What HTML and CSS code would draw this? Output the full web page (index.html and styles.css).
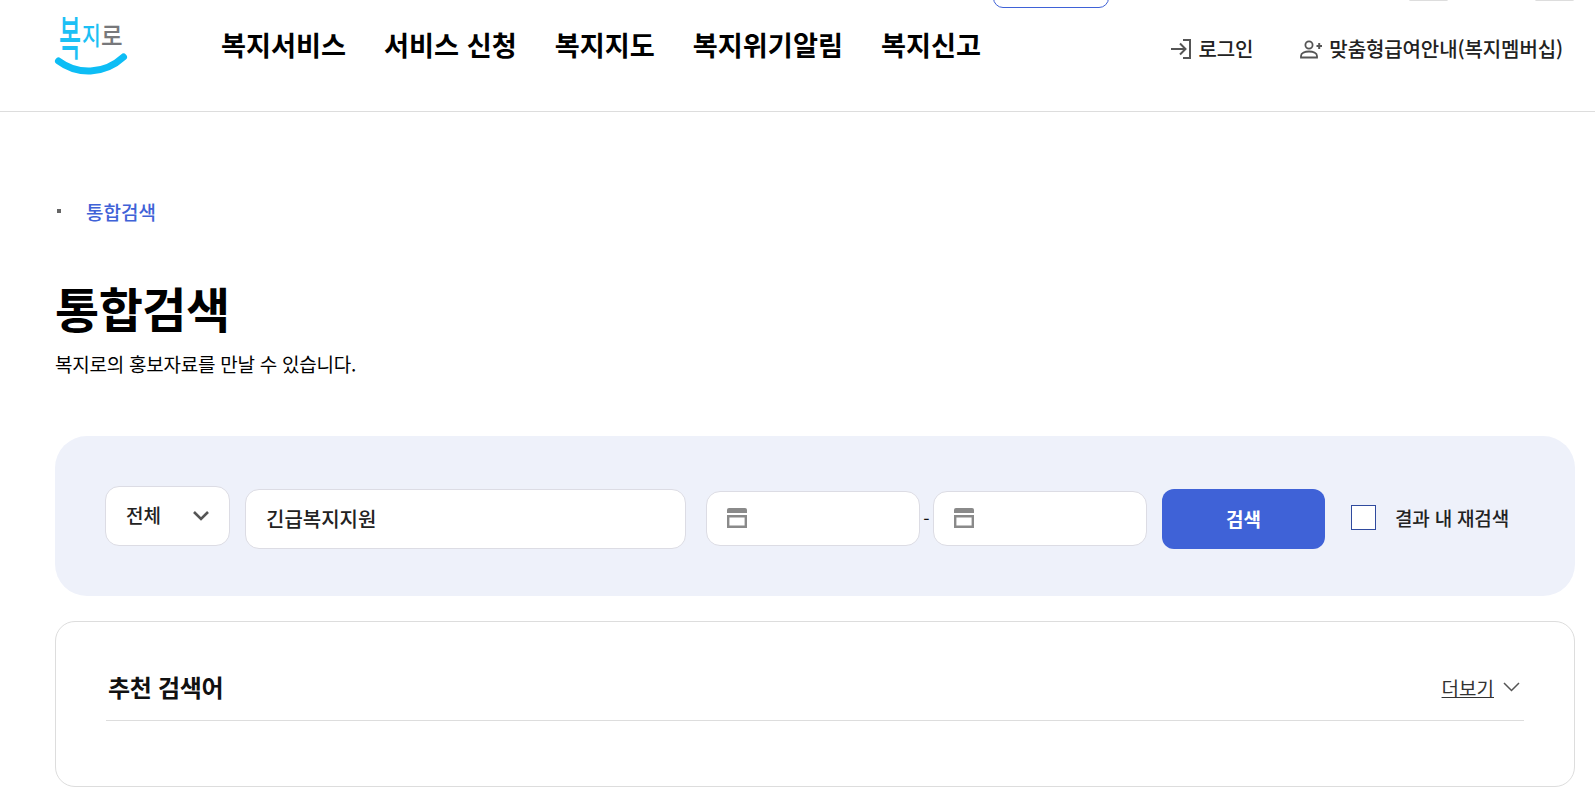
FILE: index.html
```html
<!DOCTYPE html>
<html lang="ko">
<head>
<meta charset="utf-8">
<title>통합검색</title>
<link rel="stylesheet" href="styles.css">
</head>
<body>
<header class="header">
  <a class="logo" href="#" aria-label="복지로">
    <svg width="76" height="72" viewBox="0 0 76 72">
      <text class="logo-a" transform="translate(7 47) scale(1 1.93)">복</text>
      <text class="logo-b" transform="translate(30 37) scale(.85 1.05)">지</text>
      <text class="logo-c" transform="translate(49 37) scale(.98 1.05)">로</text>
      <path d="M6.500 53 C25 67 52 67 71.500 49" fill="none" stroke="#0dbdf5" stroke-width="7" stroke-linecap="round"/>
    </svg>
  </a>
  <nav class="gnb">
    <a href="#">복지서비스</a>
    <a href="#">서비스 신청</a>
    <a href="#">복지지도</a>
    <a href="#">복지위기알림</a>
    <a href="#">복지신고</a>
  </nav>
  <div class="util">
    <a href="#" class="util-link">
      <svg width="20" height="20" viewBox="0 0 20 20" fill="none" stroke="#555" stroke-width="2">
        <path d="M0 10H14M9 4.500L14.500 10L9 15.500"/><path d="M12 1H19V19H12"/>
      </svg>로그인</a>
    <a href="#" class="util-link">
      <svg width="22" height="20" viewBox="0 0 22 20" fill="none" stroke="#555" stroke-width="1.800">
        <circle cx="9" cy="6" r="3.600"/><path d="M1 18.500V17C1 14 5 12.500 9 12.500S17 14 17 17V18.500Z"/><path d="M16.500 7H22M19.200 4V10" stroke-width="2"/>
      </svg>맞춤형급여안내(복지멤버십)</a>
  </div>
  <div class="top-pill"></div>
  <div class="top-tab first"></div>
  <div class="top-tab second"></div>
</header>
<main class="main">
  <div class="crumb"><i class="crumb-dot"></i><span>통합검색</span></div>
  <h1 class="title">통합검색</h1>
  <p class="desc">복지로의 홍보자료를 만날 수 있습니다.</p>
  <section class="search">
    <div class="select"><span class="raise">전체</span>
      <svg width="18" height="11" viewBox="0 0 18 11" fill="none" stroke="#555" stroke-width="2.600"><path d="M2 2L9 9L16 2"/></svg>
    </div>
    <div class="field keyword"><span class="raise">긴급복지지원</span></div>
    <div class="dates">
      <div class="field date">
        <svg width="20" height="20" viewBox="0 0 20 20"><path fill="#8a8a8a" d="M0 2a2 2 0 0 1 2-2h16a2 2 0 0 1 2 2v3H0V2z"/><path fill="none" stroke="#8a8a8a" stroke-width="2.400" d="M1.200 8.200h17.600v10.600H1.200z"/></svg>
      </div>
      <span class="dash">-</span>
      <div class="field date">
        <svg width="20" height="20" viewBox="0 0 20 20"><path fill="#8a8a8a" d="M0 2a2 2 0 0 1 2-2h16a2 2 0 0 1 2 2v3H0V2z"/><path fill="none" stroke="#8a8a8a" stroke-width="2.400" d="M1.200 8.200h17.600v10.600H1.200z"/></svg>
      </div>
    </div>
    <button class="submit" type="button">검색</button>
    <label class="check"><i class="box"></i>결과 내 재검색</label>
  </section>
  <section class="reco">
    <div class="reco-head">
      <h2>추천 검색어</h2>
      <a href="#" class="more"><u>더보기</u>
        <svg width="17" height="10" viewBox="0 0 17 10" fill="none" stroke="#555" stroke-width="1.500"><path d="M1 1L8.500 8.500L16 1"/></svg>
      </a>
    </div>
  </section>
</main>
</body>
</html>
```
FILE: styles.css
```css
* { box-sizing: border-box; }
html, body { margin: 0; padding: 0; }
body {
  width: 1595px;
  height: 795px;
  overflow: hidden;
  background: #fff;
  color: #111;
  font-family: "Noto Sans CJK KR", "Noto Sans", sans-serif;
}
a { color: inherit; text-decoration: none; }
.header {
  position: relative;
  height: 112px;
  border-bottom: 1px solid #ddd;
  display: flex;
  align-items: flex-start;
  padding-left: 52px;
}
.logo { display: block; margin-top: 8px; width: 76px; flex: none; }
.logo svg { display: block; overflow: visible; }
.logo-a, .logo-b, .logo-c { font-size: 24px; font-weight: 500; font-family: "Noto Sans CJK KR", sans-serif; }
.logo-a, .logo-b { fill: #1cc0f5; }
.logo-c { fill: #77787b; }
.gnb {
  display: flex;
  gap: 38px;
  margin-left: 93px;
  margin-top: 25px;
  font-size: 27.200px;
  font-weight: 700;
  line-height: 38px;
  color: #000;
  white-space: nowrap;
}
.util {
  margin-left: auto;
  margin-top: 35px;
  display: flex;
  gap: 47px;
  padding-right: 32px;
  font-size: 20px;
  font-weight: 500;
  letter-spacing: -0.1px;
  line-height: 28px;
  color: #222;
}
.util-link { display: flex; align-items: center; gap: 7px; white-space: nowrap; }
.top-pill {
  position: absolute;
  left: 993px;
  top: -20px;
  width: 116px;
  height: 28px;
  border: 1px solid #3f62d7;
  border-radius: 10px;
}
.top-tab { position: absolute; top: -2px; width: 39px; height: 3px; background: #ddd; border-radius: 2px; }
.top-tab.first { left: 1409px; }
.top-tab.second { left: 1535px; }
.main { padding: 0 20px 0 55px; }
.crumb {
  display: flex;
  align-items: center;
  margin-top: 86px;
  height: 26px;
  font-size: 19px;
  color: #3f62d7;
  font-weight: 500;
}
.crumb-dot { width: 4px; height: 4px; background: #666; margin: 0 25px 0 2px; }
.title {
  margin: 48px 0 0;
  font-size: 48px;
  line-height: 70px;
  font-weight: 700;
  letter-spacing: -0.5px;
  color: #000;
}
.desc {
  margin: 8px 0 0;
  font-size: 19px;
  font-weight: 400;
  line-height: 28px;
  letter-spacing: -0.25px;
  color: #000;
}
.search {
  margin-top: 58px;
  height: 160px;
  background: #eef1fa;
  border-radius: 32px;
  display: flex;
  align-items: center;
  padding: 6px 0 0 50px;
}
.select {
  width: 125px;
  height: 60px;
  margin-top: -7px;
  background: #fff;
  border: 1px solid #dcdce4;
  border-radius: 14px;
  display: flex;
  align-items: center;
  justify-content: space-between;
  padding: 0 19px 0 20px;
  font-size: 19px;
  font-weight: 500;
  color: #222;
}
.raise { padding-bottom: 2px; }
.field {
  background: #fff;
  border: 1px solid #dcdce4;
  border-radius: 14px;
  display: flex;
  align-items: center;
}
.keyword {
  width: 441px;
  height: 60px;
  margin-left: 15px;
  padding-left: 20px;
  font-size: 20px;
  font-weight: 500;
  color: #222;
}
.dates { display: flex; align-items: center; margin: -2px 0 0 20px; }
.date { width: 214px; height: 55px; padding-left: 20px; }
.dash { width: 13px; text-align: center; font-size: 18px; }
.submit {
  width: 163px;
  height: 60px;
  margin-left: 15px;
  padding: 0 0 2px;
  border: 0;
  border-radius: 12px;
  background: #3f62d7;
  color: #fff;
  font: 700 19px "Noto Sans CJK KR", sans-serif;
}
.check {
  display: flex;
  align-items: center;
  margin: -3px 0 0 26px;
  font-size: 19px;
  font-weight: 500;
  letter-spacing: -0.2px;
  color: #222;
}
.box {
  width: 25px;
  height: 25px;
  background: #fff;
  border: 1px solid #2f4a9e;
  margin-right: 19px;
}
.reco {
  margin-top: 25px;
  height: 166px;
  border: 1px solid #ddd;
  border-radius: 20px;
  padding: 0 50px;
}
.reco-head {
  height: 99px;
  padding-top: 32px;
  border-bottom: 1px solid #ddd;
  display: flex;
  justify-content: space-between;
  align-items: center;
}
.reco-head h2 {
  margin: 0 0 0 2px;
  font-size: 24px;
  line-height: 34px;
  font-weight: 700;
  letter-spacing: -0.3px;
  color: #111;
}
.more {
  display: flex;
  align-items: center;
  gap: 9px;
  font-size: 19px;
  color: #333;
  padding-right: 4px;
}
```
